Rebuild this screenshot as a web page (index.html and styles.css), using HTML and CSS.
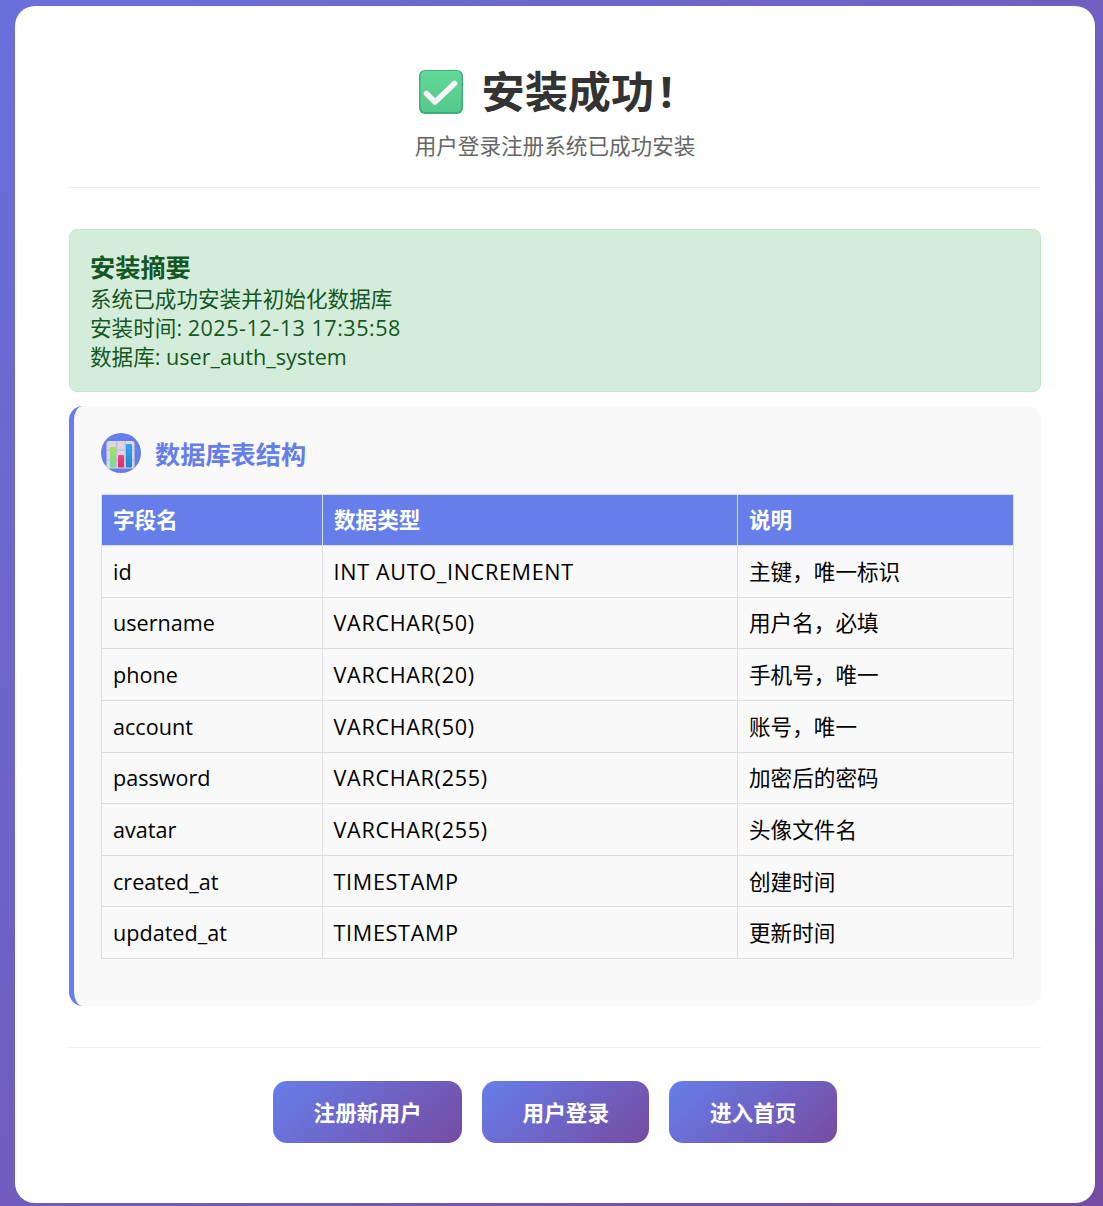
FILE: index.html
```html
<!DOCTYPE html>
<html lang="zh-CN">
<head>
<meta charset="utf-8">
<title>安装成功</title>
<link rel="stylesheet" href="styles.css">
</head>
<body>
<main class="card">
  <header class="head">
    <h1 class="title">
      <svg class="check" viewBox="0 0 44 44" aria-hidden="true">
        <defs>
          <linearGradient id="cg" x1="0" y1="0" x2="0" y2="1"><stop offset="0" stop-color="#62d998"/><stop offset="1" stop-color="#54c98b"/></linearGradient>
        </defs>
        <rect x="0" y="0" width="44" height="44" rx="6" fill="#3fae78"/>
        <rect x="1.500" y="1" width="41" height="41" rx="5" fill="url(#cg)"/>
        <path d="M7.500 23.500 L16 32 L35.500 13.500" fill="none" stroke="#f8f3fb" stroke-width="5.500" stroke-linecap="round" stroke-linejoin="round"/>
      </svg>
      <span class="title-text">安装成功<span class="bang">!</span></span>
    </h1>
    <p class="subtitle">用户登录注册系统已成功安装</p>
  </header>

  <section class="summary">
    <strong class="summary-title">安装摘要</strong>
    <div>系统已成功安装并初始化数据库</div>
    <div>安装时间: <span class="digits">2025-12-13 17:35:58</span></div>
    <div>数据库: user_auth_system</div>
  </section>

  <section class="schema">
    <h2 class="schema-title">
      <span class="chart-badge">
        <svg viewBox="0 0 40 40" width="40" height="40" aria-hidden="true">
          <defs>
            <linearGradient id="bg1" x1="0" y1="0" x2="0" y2="1"><stop offset="0" stop-color="#a6e05a"/><stop offset="1" stop-color="#6fdca0"/></linearGradient>
            <linearGradient id="bg2" x1="0" y1="0" x2="0" y2="1"><stop offset="0" stop-color="#e84a80"/><stop offset="1" stop-color="#e0286a"/></linearGradient>
            <linearGradient id="bg3" x1="0" y1="0" x2="0" y2="1"><stop offset="0" stop-color="#2fa8ee"/><stop offset="1" stop-color="#2a7fd0"/></linearGradient>
          </defs>
          <circle cx="20" cy="20" r="20" fill="#667eea"/>
          <rect x="5.500" y="8" width="28" height="27.500" rx="2.500" fill="#dcd6e4"/>
          <path d="M5.500 17H33.500M5.500 27H33.500M15.800 8V35.500M24.200 8V35.500" stroke="#b5afc0" stroke-width="0.8"/>
          <rect x="9" y="14" width="6" height="20.500" rx="1" fill="url(#bg1)"/>
          <rect x="17" y="22" width="6" height="12.500" rx="1" fill="url(#bg2)"/>
          <rect x="25" y="11" width="6" height="23.500" rx="1" fill="url(#bg3)"/>
        </svg>
      </span>
      <span>数据库表结构</span>
    </h2>
    <table class="fields">
      <colgroup><col class="c1"><col class="c2"><col class="c3"></colgroup>
      <thead><tr><th>字段名</th><th>数据类型</th><th>说明</th></tr></thead>
      <tbody>
        <tr><td>id</td><td class="type">INT AUTO_INCREMENT</td><td>主键，唯一标识</td></tr>
        <tr><td>username</td><td class="type">VARCHAR(50)</td><td>用户名，必填</td></tr>
        <tr><td>phone</td><td class="type">VARCHAR(20)</td><td>手机号，唯一</td></tr>
        <tr><td>account</td><td class="type">VARCHAR(50)</td><td>账号，唯一</td></tr>
        <tr><td>password</td><td class="type">VARCHAR(255)</td><td>加密后的密码</td></tr>
        <tr><td>avatar</td><td class="type">VARCHAR(255)</td><td>头像文件名</td></tr>
        <tr><td>created_at</td><td class="type">TIMESTAMP</td><td>创建时间</td></tr>
        <tr><td>updated_at</td><td class="type">TIMESTAMP</td><td>更新时间</td></tr>
      </tbody>
    </table>
  </section>

  <nav class="actions">
    <a class="btn" href="#">注册新用户</a>
    <a class="btn" href="#">用户登录</a>
    <a class="btn" href="#">进入首页</a>
  </nav>
</main>
</body>
</html>
```
FILE: styles.css
```css
* { box-sizing: border-box; }
html, body { margin: 0; height: 100%; overflow: hidden; }
body {
  width: 1103px;
  height: 1206px;
  padding: 6px 8px 3px 15px;
  background: linear-gradient(135deg, #6970db 0%, #764ba2 100%);
  font-family: "Open Sans", "Noto Sans CJK SC", sans-serif;
  font-size: 21.6px;
}
.card {
  width: 1080px;
  height: 1197px;
  background: #fff;
  border-radius: 20px;
  padding: 54px;
  display: flex;
  flex-direction: column;
}
.head {
  height: 128px;
  border-bottom: 1px solid #eeeeee;
  text-align: center;
}
.title {
  margin: 0;
  height: 64px;
  display: flex;
  justify-content: center;
  align-items: center;
  gap: 18px;
  font-size: 43.2px;
  font-weight: 700;
  color: #333;
  line-height: 64px;
}
.check { width: 44px; height: 44px; flex: none; }
.title-text { white-space: nowrap; }
.bang { margin-left: 6px; margin-right: 18px; }
.subtitle {
  margin: 6px 0 0;
  color: #666;
  font-size: 21.6px;
  line-height: 32px;
}
.summary {
  margin-top: 41px;
  height: 163px;
  padding: 21px 20px 0;
  background: #d4edda;
  border: 1px solid #c3e6cb;
  border-radius: 8px;
  color: #155724;
  line-height: 29px;
}
.summary-title { display: block; font-size: 25.2px; line-height: 33px; font-weight: 700; }
.digits { letter-spacing: 0.5px; }
.schema {
  margin-top: 14px;
  height: 600px;
  padding: 27px 27px 0 27px;
  background: #f9f9f9;
  border-left: 5px solid #667eea;
  border-radius: 14px;
}
.schema-title {
  margin: 0 0 21px;
  height: 40px;
  display: flex;
  align-items: center;
  gap: 14px;
  color: #667eea;
  font-size: 25.2px;
  font-weight: 700;
}
.chart-badge { width: 40px; height: 40px; flex: none; display: block; }
.chart-badge svg { display: block; }
.fields {
  width: 912px;
  border-collapse: collapse;
  table-layout: fixed;
  color: #000;
  font-size: 21.6px;
}
.c1 { width: 221px; }
.c2 { width: 415px; }
.c3 { width: 276px; }
.fields th, .fields td {
  border: 1px solid #dddddd;
  padding: 1px 11px 0;
  text-align: left;
  height: 51.625px;
  line-height: 30px;
}
.fields th { height: 51px; padding-top: 0; background: #667eea; color: #fff; font-weight: 700; }
.fields .type { letter-spacing: 0.68px; padding-left: 10.5px; }
.actions {
  margin-top: 41px;
  border-top: 1px solid #eeeeee;
  padding-top: 33px;
  display: flex;
  justify-content: center;
  gap: 20px;
}
.btn {
  display: flex;
  align-items: center;
  justify-content: center;
  height: 62px;
  padding: 0 40.5px 2px;
  border-radius: 14px;
  background: linear-gradient(135deg, #667eea 0%, #764ba2 100%);
  color: #fff;
  font-weight: 700;
  text-decoration: none;
}
```
